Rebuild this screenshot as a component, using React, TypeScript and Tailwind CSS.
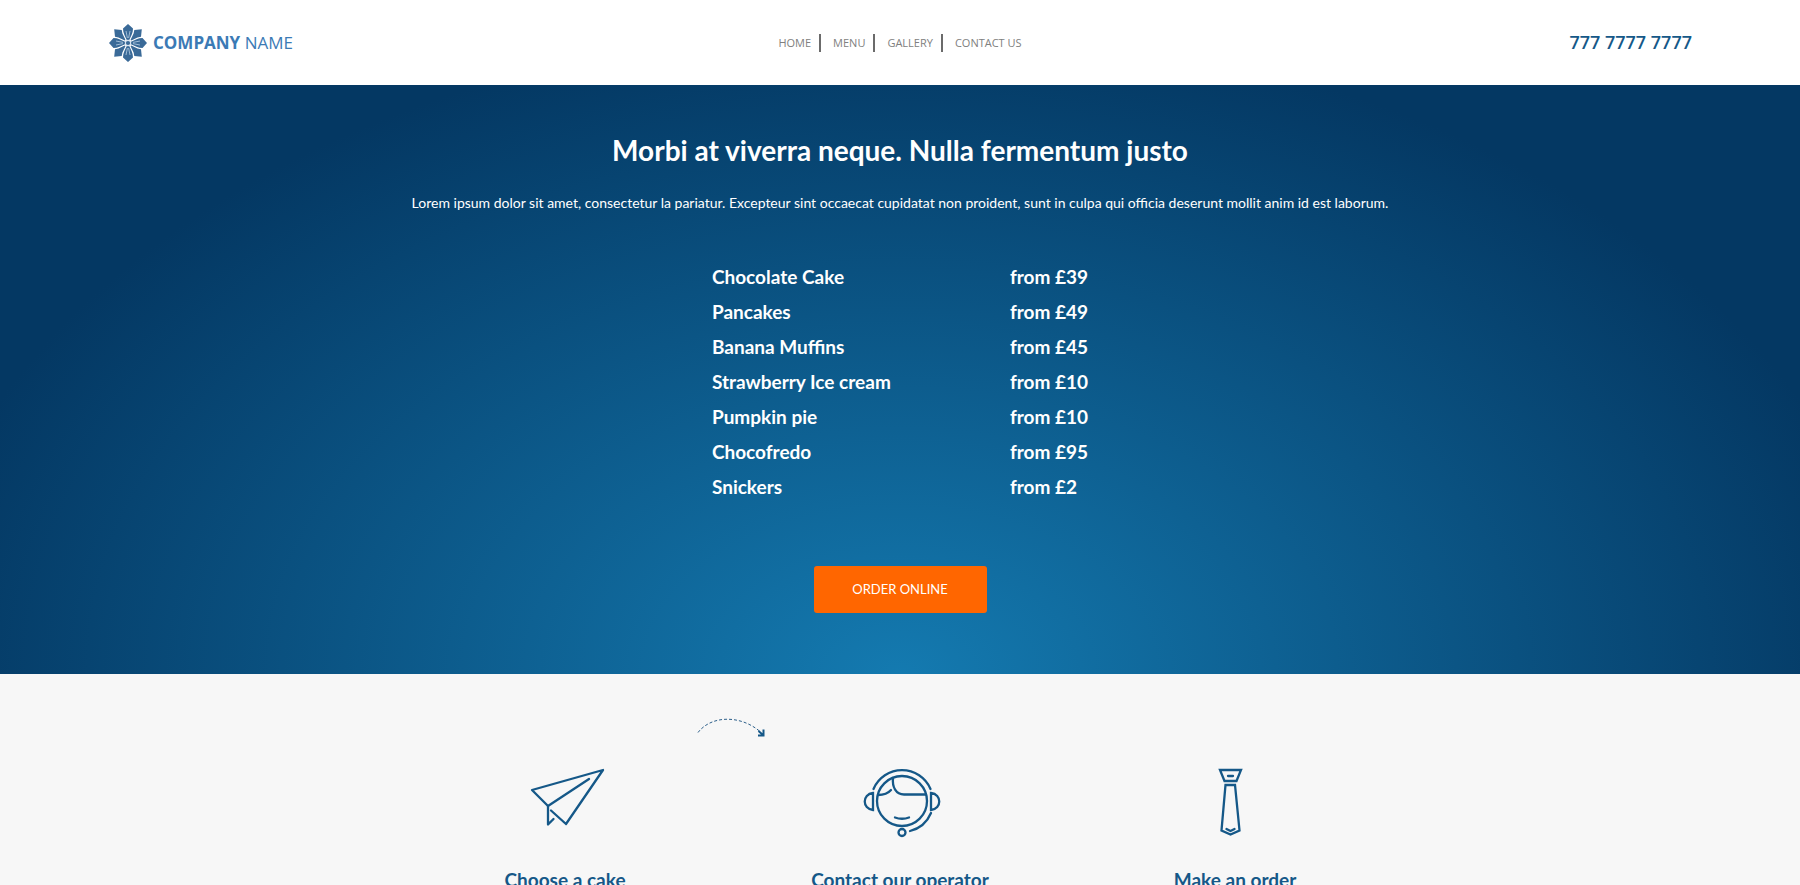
import type { ReactNode } from "react";

const navItems = ["HOME", "MENU", "GALLERY", "CONTACT US"];

const prices = [
  { name: "Chocolate Cake", price: "from £39" },
  { name: "Pancakes", price: "from £49" },
  { name: "Banana Muffins", price: "from £45" },
  { name: "Strawberry Ice cream", price: "from £10" },
  { name: "Pumpkin pie", price: "from £10" },
  { name: "Chocofredo", price: "from £95" },
  { name: "Snickers", price: "from £2" },
];

function LogoMark() {
  const angles = [0, 90, 180, 270];
  return (
    <svg viewBox="-20 -20 40 40" className="size-10" aria-hidden="true">
      {angles.map((a) => (
        <g key={a} transform={`rotate(${a})`}>
          <path d="M0 -19 L5 -14.500 C5 -10 3 -7 1.200 -3 L-1.200 -3 C-3 -7 -5 -10 -5 -14.500 Z" fill="#3a6a98" />
          <path d="M-2 -12 L-0.600 -5 M2 -12 L0.600 -5" stroke="#a9c4dc" strokeWidth="0.9" />
          <path d="M6.300 -13 L13.800 -13.800 L13 -6.300 L9.500 -5.600 L3.300 -2.600 L2.600 -3.300 L5.600 -9.500 Z" fill="#3a6a98" />
        </g>
      ))}
      <circle r="3.2" fill="#dbe6f0" />
      <circle r="2.1" fill="#3a6a98" />
    </svg>
  );
}

function PlaneIcon() {
  return (
    <svg viewBox="-4 0 79 60" className="h-[60px] w-[79px]" fill="none" stroke="#155888" strokeWidth="2.3" strokeLinecap="round" strokeLinejoin="round" aria-hidden="true">
      <path d="M18 38 L2 22 L73 2 L36 56 L21 42.500" />
      <path d="M59 11 L18 38 V56.500 L23.500 51" />
    </svg>
  );
}

function OperatorIcon() {
  return (
    <svg viewBox="-4 0 82 70" className="h-[70px] w-[82px]" fill="none" stroke="#155888" strokeWidth="2.3" strokeLinecap="round" aria-hidden="true">
      <circle cx="39" cy="33" r="25" />
      <path d="M10.500 21 A31 31 0 0 1 67.500 21" />
      <path d="M10 25 C-1 26 -1 41 10 42 Z M68 25 C79 26 79 41 68 42 Z" />
      <path d="M68 45 A31 31 0 0 1 47 63" />
      <path d="M30 10 C29 19 33 26.500 41 26.500 H63 M15 27 C20 27 25 25.500 28 22" />
      <path d="M32 49.500 Q39 52 46 49.500" />
      <circle cx="39" cy="64.500" r="3.500" />
    </svg>
  );
}

function TieIcon() {
  return (
    <svg viewBox="0 0 34 68" className="h-[68px] w-[34px]" fill="none" stroke="#155888" strokeWidth="2.3" strokeLinecap="round" strokeLinejoin="miter" aria-hidden="true">
      <path d="M2 2 H23 L18.500 13 H6.500 Z M10 8 H15" />
      <path d="M7.500 17 H17 L21.500 62.500 L12.500 66.500 L3.500 62.500 Z M8.500 61 L12.500 63 L16.500 61" />
    </svg>
  );
}

function DashedArrow() {
  return (
    <svg viewBox="0 0 68 19" className="h-5 w-17" fill="none" aria-hidden="true">
      <path d="M1 15 C14 -2 43 -3 63 14" stroke="#2c5f8a" strokeDasharray="3 2" />
      <path d="M66.500 12 V18 H61 M66 17.500 L61.500 13.500" stroke="#155888" strokeWidth="2" />
    </svg>
  );
}

function Step({ icon, title }: { icon: ReactNode; title: string }) {
  return (
    <li className="flex w-[335px] flex-col items-center">
      <div className="flex h-[70px] items-start">{icon}</div>
      <h3 className="mt-[30px] text-[19px] leading-6 font-bold whitespace-nowrap text-[#155888]">{title}</h3>
    </li>
  );
}

export default function App() {
  return (
    <div className="min-h-screen bg-[#f7f7f7] font-[Lato,'Open_Sans',sans-serif] text-white">
      <header className="grid h-[85px] grid-cols-3 items-center bg-white px-[6%] font-['Open_Sans','Noto_Sans',sans-serif]">
        <a href="#" className="flex items-center gap-[5px] text-[17px] text-[#3b7ab5]">
          <LogoMark />
          <span>
            <strong>COMPANY</strong> NAME
          </span>
        </a>
        <nav className="flex justify-center text-[11px] leading-[18px] text-[#808080]">
          {navItems.map((item) => (
            <a key={item} href="#" className="mr-3 border-r-2 border-[#6b6b6b] pr-2 last:mr-0 last:border-0 last:pr-0">
              {item}
            </a>
          ))}
        </nav>
        <a href="tel:77777777777" className="justify-self-end text-[18px] font-semibold text-[#155888]">
          777 7777 7777
        </a>
      </header>

      <section className="flex flex-col items-center bg-[radial-gradient(ellipse_at_bottom,#147ab0_0%,#043863_78%)] pt-[47px] pb-[61px]">
        <h1 className="text-[28px] leading-9 font-bold">Morbi at viverra neque. Nulla fermentum justo</h1>
        <p className="mt-[23px] text-[14px] leading-6">
          Lorem ipsum dolor sit amet, consectetur la pariatur. Excepteur sint occaecat cupidatat non proident, sunt in culpa qui officia deserunt mollit anim id est laborum.
        </p>
        <table className="mt-11 text-left text-[19px] leading-[35px] font-bold">
          <tbody>
            {prices.map((row) => (
              <tr key={row.name}>
                <td className="w-[298px] p-0">{row.name}</td>
                <td className="p-0">{row.price}</td>
              </tr>
            ))}
          </tbody>
        </table>
        <button type="button" className="mt-[62px] h-[47px] w-[173px] rounded-[3px] bg-[#ff6600] text-[13px]">
          ORDER ONLINE
        </button>
      </section>

      <section className="flex flex-col pt-[43px]">
        <div className="flex justify-center pr-[338px]">
          <DashedArrow />
        </div>
        <ol className="mt-[31px] flex justify-center">
          <Step icon={<PlaneIcon />} title="Choose a cake" />
          <Step icon={<OperatorIcon />} title="Contact our operator" />
          <Step icon={<TieIcon />} title="Make an order" />
        </ol>
      </section>
    </div>
  );
}
